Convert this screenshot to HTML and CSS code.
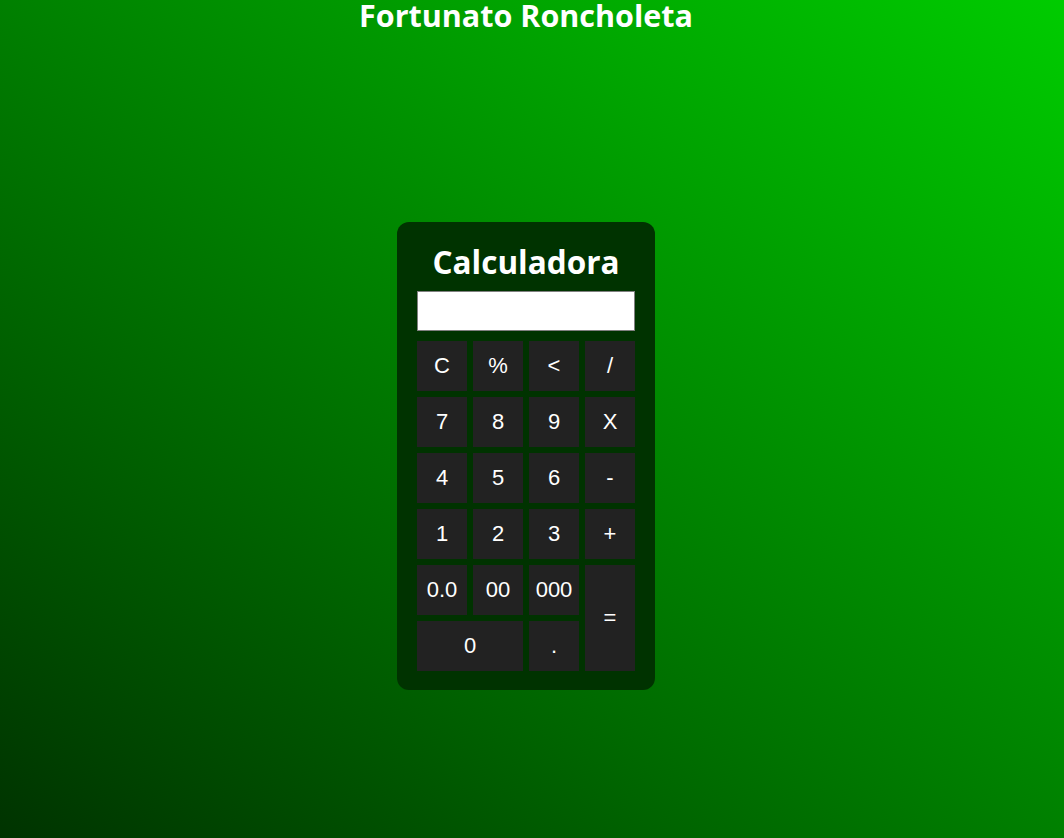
FILE: index.html
```html
<!DOCTYPE html>
<html lang="es">
<head>
<meta charset="utf-8">
<title>Calculadora</title>
<link rel="stylesheet" href="styles.css">
</head>
<body>
<div class="page">
  <h1 class="name">Fortunato Roncholeta</h1>
  <div class="calc">
    <h2 class="calc-title">Calculadora</h2>
    <div class="display"></div>
    <div class="keys">
      <div class="key">C</div>
      <div class="key">%</div>
      <div class="key">&lt;</div>
      <div class="key">/</div>
      <div class="key">7</div>
      <div class="key">8</div>
      <div class="key">9</div>
      <div class="key">X</div>
      <div class="key">4</div>
      <div class="key">5</div>
      <div class="key">6</div>
      <div class="key">-</div>
      <div class="key">1</div>
      <div class="key">2</div>
      <div class="key">3</div>
      <div class="key">+</div>
      <div class="key">0.0</div>
      <div class="key">00</div>
      <div class="key">000</div>
      <div class="key key-eq">=</div>
      <div class="key key-zero">0</div>
      <div class="key">.</div>
    </div>
  </div>
</div>
</body>
</html>
```

FILE: styles.css
```css
html, body {
  margin: 0;
  padding: 0;
  height: 100%;
}
body {
  background: linear-gradient(to top right, #003300, #00cc00);
  overflow: hidden;
}
.page {
  padding-right: 12px;
  display: flex;
  flex-direction: column;
  align-items: center;
}
.name {
  margin: 0;
  font-family: "Open Sans", sans-serif;
  font-weight: 700;
  font-size: 30.5px;
  line-height: 30px;
  color: #ffffff;
}
.calc {
  margin-top: 192px;
  width: 258px;
  box-sizing: border-box;
  background: #003300;
  border-radius: 12px;
  padding: 20px 20px 19px;
}
.calc-title {
  margin: 0 0 10px;
  text-align: center;
  font-family: "Open Sans", sans-serif;
  font-weight: 700;
  font-size: 31.5px;
  line-height: 39px;
  color: #ffffff;
}
.display {
  height: 40px;
  box-sizing: border-box;
  background: #ffffff;
  border: 1px solid #808080;
  margin-bottom: 10px;
}
.keys {
  display: grid;
  grid-template-columns: repeat(4, 50px);
  grid-auto-rows: 50px;
  gap: 6px;
}
.key {
  background: #222222;
  color: #ffffff;
  font-family: "Liberation Sans", Arial, sans-serif;
  font-size: 22px;
  display: flex;
  align-items: center;
  justify-content: center;
}
.key-eq {
  grid-column: 4;
  grid-row: 5 / span 2;
}
.key-zero {
  grid-column: 1 / span 2;
}
```
